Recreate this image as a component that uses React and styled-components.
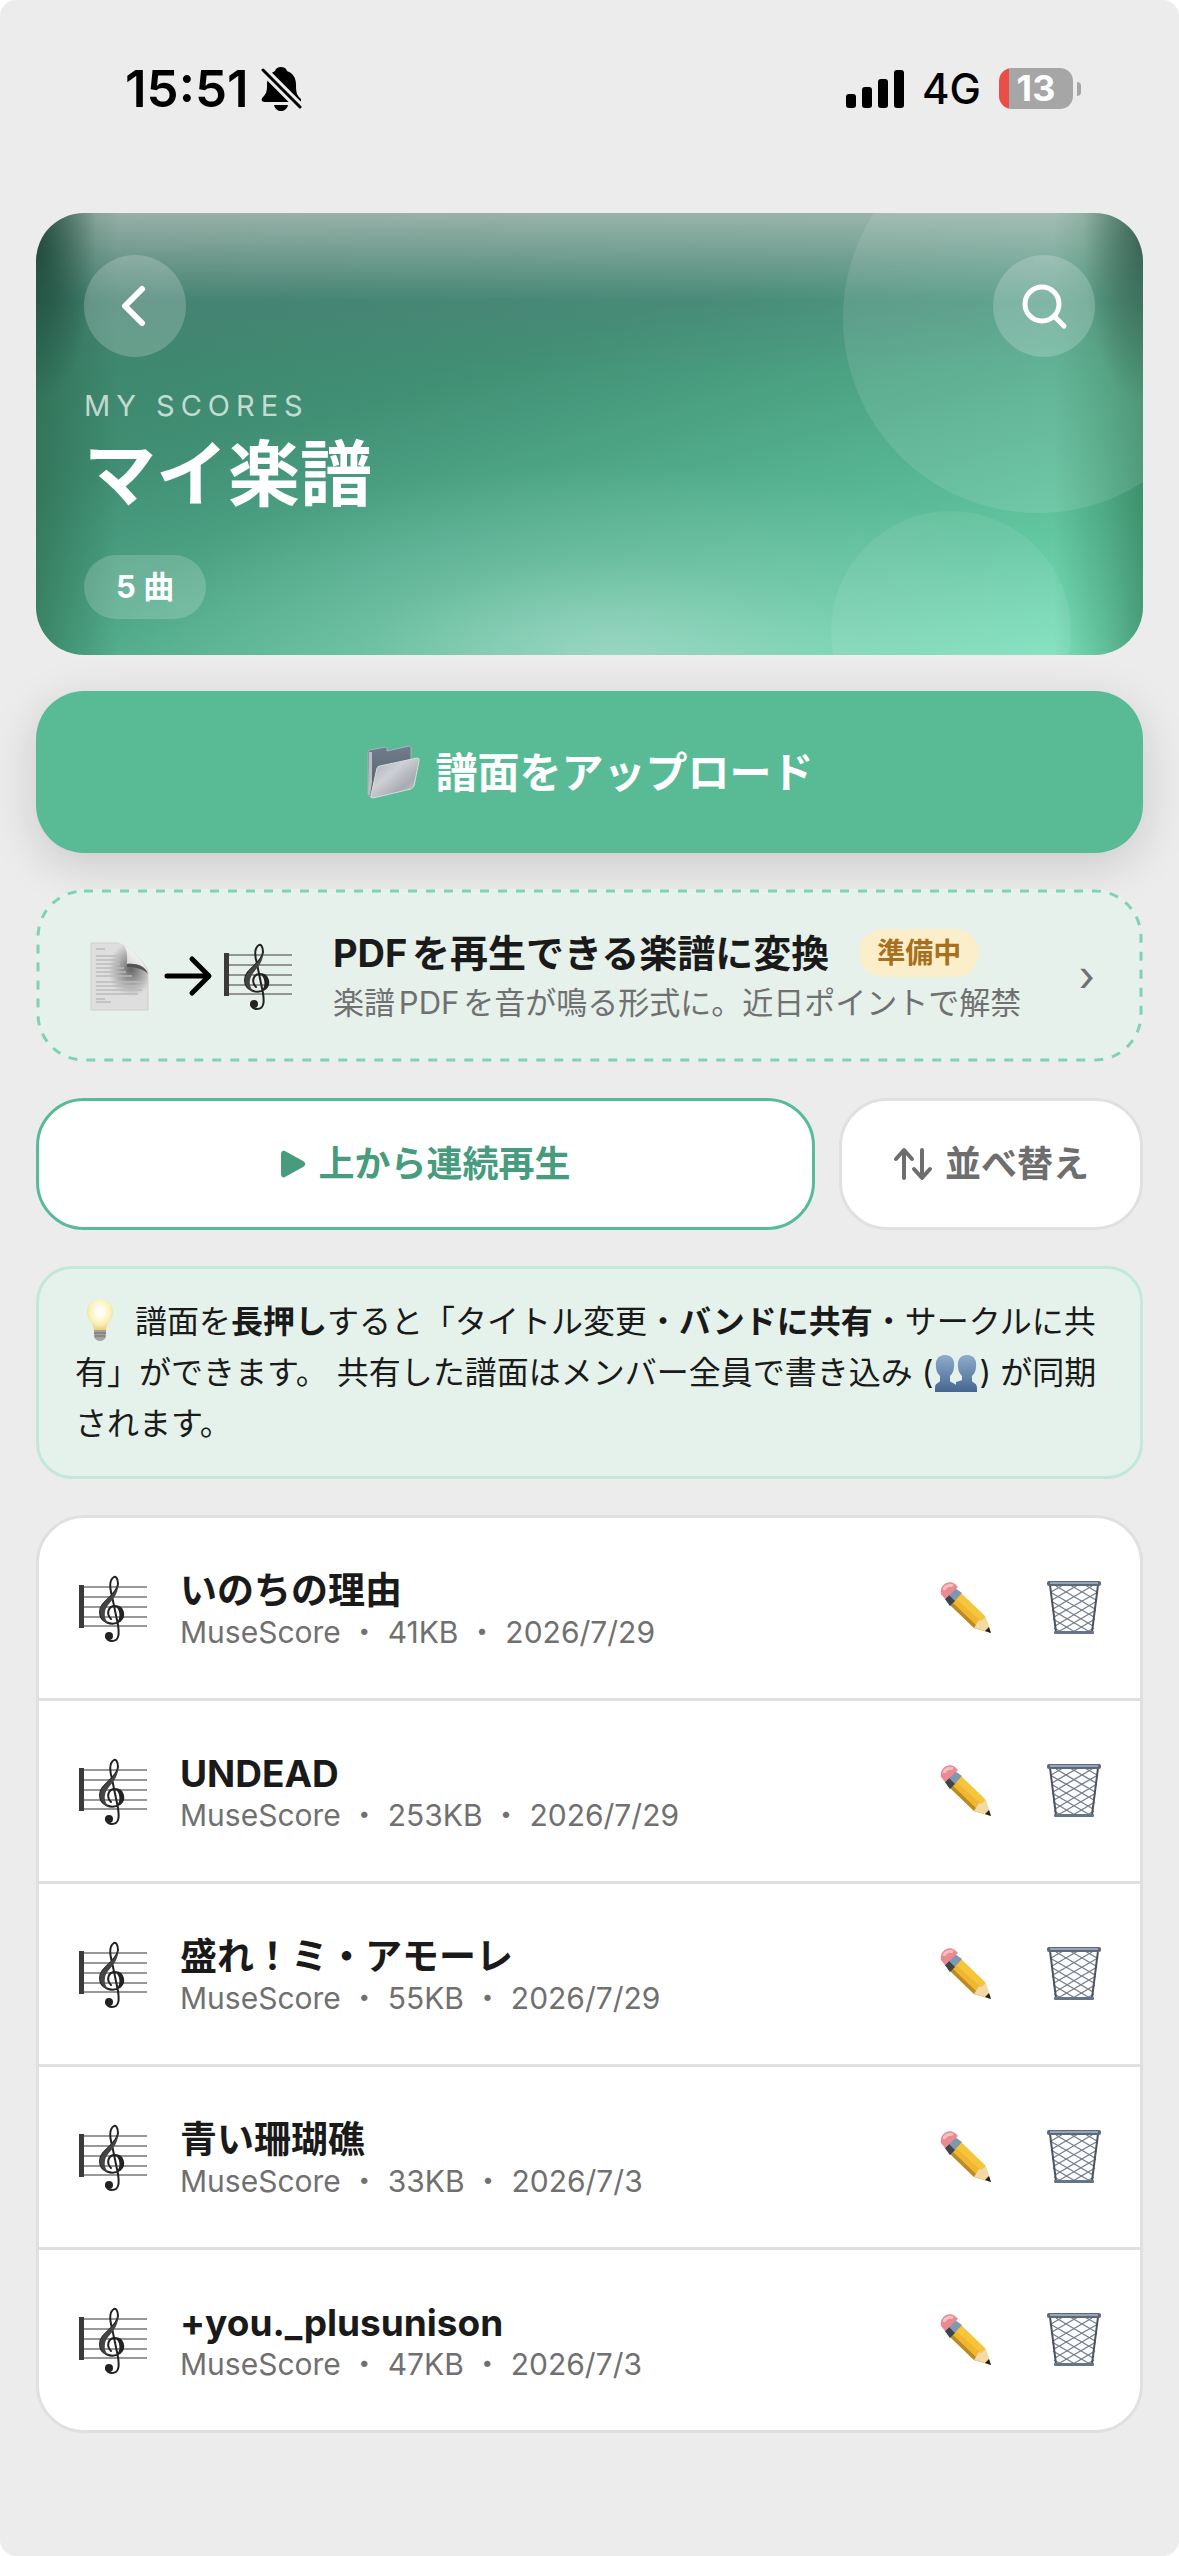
import React from 'react';
import styled, { createGlobalStyle } from 'styled-components';

const GlobalStyle = createGlobalStyle`
  html {
    background: #fff;
  }

  body {
    margin: 0;
    font-family: Inter, 'Noto Sans CJK JP', sans-serif;
    color: #1a1a1a;
    text-autospace: normal;
  }

  *, *::before, *::after {
    box-sizing: border-box;
  }

  button {
    font: inherit;
    color: inherit;
    border: none;
    padding: 0;
    cursor: pointer;
  }
`;

const Screen = styled.div`
  min-height: 100vh;
  padding-bottom: 123px;
  background: #ececec;
  border-radius: 16px;
`;

const StatusBar = styled.header`
  display: flex;
  align-items: center;
  justify-content: space-between;
  height: 177px;
  padding: 0 98px 0 125px;
  color: #000;
`;

const StatusGroup = styled.div`
  display: flex;
  align-items: center;
  gap: ${(props) => props.$gap}px;
`;

const Clock = styled.time`
  font-size: 51px;
  font-weight: 600;
  line-height: 60px;
`;

const Network = styled.span`
  font-size: 42px;
  font-weight: 500;
  line-height: 60px;
`;

const Battery = styled.div`
  display: flex;
  align-items: center;
  gap: 4px;
`;

const BatteryBody = styled.div`
  width: 74px;
  height: 41px;
  border-radius: 13px;
  background: linear-gradient(90deg, #eb4e46 10px, #a6a6a6 10px);
  color: #fff;
  font-size: 36px;
  font-weight: 700;
  line-height: 41px;
  text-align: center;
`;

const BatteryCap = styled.div`
  width: 4px;
  height: 14px;
  border-radius: 0 4px 4px 0;
  background: #a6a6a6;
`;

const Main = styled.main`
  display: flex;
  flex-direction: column;
  gap: 36px;
  padding: 36px 36px 0;
`;

const Hero = styled.section`
  position: relative;
  overflow: hidden;
  padding: 42px 48px 36px;
  border-radius: 48px;
  color: #fff;
  background:
    radial-gradient(60px 160px at 0 30px, rgba(24, 66, 54, 0.85), rgba(24, 66, 54, 0)),
    radial-gradient(60px 160px at 100% 30px, rgba(24, 66, 54, 0.75), rgba(24, 66, 54, 0)),
    linear-gradient(90deg, rgba(38, 96, 70, 0.5), rgba(38, 96, 70, 0) 82px),
    linear-gradient(270deg, rgba(38, 112, 74, 0.6), rgba(38, 112, 74, 0.3) 40px, rgba(38, 112, 74, 0) 90px),
    linear-gradient(180deg, rgba(214, 208, 210, 0.6), rgba(110, 120, 140, 0.16) 88px, rgba(90, 110, 130, 0) 160px),
    radial-gradient(500px 190px at 52% 100%, rgba(190, 226, 216, 0.6), rgba(190, 226, 216, 0.2) 50%, rgba(190, 226, 216, 0)),
    linear-gradient(164deg, #3a7d67 0%, #408e73 36%, #50aa8a 58%, #61c5a0 80%, #7fe6c2 100%);
`;

const Bubble = styled.span`
  position: absolute;
  width: ${(props) => props.$size}px;
  height: ${(props) => props.$size}px;
  border-radius: 50%;
  background: rgba(255, 255, 255, ${(props) => props.$alpha});
`;

const TopBubble = styled(Bubble)`
  top: -90px;
  right: -90px;
`;

const BottomBubble = styled(Bubble)`
  bottom: -96px;
  right: 72px;
`;

const HeroBar = styled.div`
  position: relative;
  display: flex;
  justify-content: space-between;
`;

const RoundButton = styled.button`
  display: flex;
  align-items: center;
  justify-content: center;
  width: 102px;
  height: 102px;
  border-radius: 50%;
  background: rgba(255, 255, 255, 0.2);
`;

const Eyebrow = styled.p`
  margin: 32px 0 0;
  font-size: 29px;
  line-height: 34px;
  letter-spacing: 6px;
  color: rgba(255, 255, 255, 0.7);
`;

const Title = styled.h1`
  margin: 0;
  font-size: 72px;
  font-weight: 700;
  line-height: 102px;
`;

const Count = styled.span`
  display: inline-block;
  margin-top: 30px;
  padding: 0 32px;
  border-radius: 32px;
  background: rgba(255, 255, 255, 0.18);
  font-size: 31px;
  font-weight: 700;
  line-height: 64px;
  vertical-align: top;
`;

const UploadButton = styled.button`
  display: flex;
  align-items: center;
  justify-content: center;
  gap: 14px;
  height: 162px;
  border-radius: 48px;
  background: #58bb96;
  box-shadow: 0 12px 48px rgba(0, 0, 0, 0.15);
  color: #fff;
  font-size: 42px;
  font-weight: 700;
`;

const ButtonLabel = styled.span`
  padding-bottom: 6px;
`;

const ConvertCard = styled.button`
  position: relative;
  display: flex;
  align-items: center;
  min-height: 173px;
  padding: 0 48px 0 51px;
  border-radius: 48px;
  background: #e6f1eb;
  text-align: left;
`;

const DashedOutline = styled.svg`
  position: absolute;
  inset: 0;
  width: 100%;
  height: 100%;
  overflow: visible;

  rect {
    x: 2px;
    y: 2px;
    width: calc(100% - 4px);
    height: calc(100% - 4px);
    rx: 46px;
    fill: none;
    stroke: #7fd3b4;
    stroke-width: 3px;
    stroke-dasharray: 9 9;
  }
`;

const ConvertIcons = styled.span`
  display: flex;
  align-items: center;
  gap: 8px;
  margin-right: 40px;
`;

const ConvertText = styled.span`
  flex: 1;
`;

const ConvertTitle = styled.span`
  display: flex;
  align-items: center;
  gap: 30px;
  font-size: 38px;
  font-weight: 700;
  line-height: 54px;
`;

const SoonBadge = styled.span`
  padding: 0 18px;
  border-radius: 24px;
  background: #fbeecb;
  color: #a8701d;
  font-size: 28px;
  font-weight: 700;
  line-height: 48px;
`;

const ConvertNote = styled.span`
  display: block;
  color: #707070;
  font-size: 31px;
  line-height: 46px;
`;

const Chevron = styled.span`
  color: #707070;
  font-size: 42px;
  line-height: 46px;
`;

const Actions = styled.div`
  display: flex;
  gap: 24px;
`;

const ActionButton = styled.button`
  display: flex;
  flex: ${(props) => (props.$primary ? '1' : 'none')};
  align-items: center;
  justify-content: center;
  gap: 12px;
  height: 132px;
  padding: 0 51px;
  border: 3px solid ${(props) => (props.$primary ? '#58bb96' : '#e0e0e0')};
  border-radius: 48px;
  background: #fff;
  color: ${(props) => (props.$primary ? '#479c7e' : '#6e6e6e')};
  font-size: 36px;
  font-weight: 700;
`;

const Tip = styled.p`
  margin: 0;
  padding: 27px 36px;
  border: 3px solid #c2e8da;
  border-radius: 36px;
  background: #e5f2eb;
  font-size: 32px;
  line-height: 51px;

  svg {
    vertical-align: -9px;
  }
`;

const ScoreList = styled.ul`
  margin: 0;
  padding: 0;
  overflow: hidden;
  border: 3px solid #e0e0e0;
  border-radius: 48px;
  background: #fff;
  list-style: none;
`;

const ScoreRow = styled.li`
  display: flex;
  align-items: center;
  height: 183px;
  padding: 0 33px 0 39px;
  border-bottom: 3px solid #e0e0e0;

  &:last-child {
    height: 180px;
    border-bottom: none;
  }
`;

const ScoreInfo = styled.div`
  flex: 1;
  min-width: 0;
  margin-left: 32px;
  padding-top: 6px;
`;

const ScoreTitle = styled.h2`
  margin: 0;
  font-size: 37px;
  font-weight: 700;
  line-height: 42px;
`;

const ScoreMeta = styled.p`
  margin: 0;
  color: #707070;
  font-size: 30px;
  line-height: 40px;
`;

const RowButton = styled.button`
  display: flex;
  align-items: center;
  justify-content: center;
  width: 66px;
  height: 66px;
  margin-left: 42px;
  background: none;
`;

const BellOffIcon = () => (
  <svg width="42" height="44" viewBox="0 0 42 44">
    <path d="M20 0c3 0 5 1 6 4 6 2 9 7 9 14 0 8 1 10 4 13 2 2 1 4-1 4H4c-4 0-4-3-2-5 3-3 4-5 4-12C6 11 9 6 14 4c1-3 3-4 6-4z" />
    <path d="M13 38h14c-1 4-4 6-7 6s-6-2-7-6z" />
    <path d="M2 3l37 37" stroke="#ececec" strokeWidth="9" />
    <path d="M2 3l37 37" stroke="#000" strokeWidth="3" strokeLinecap="round" />
  </svg>
);

const SignalIcon = () => (
  <svg width="58" height="38" viewBox="0 0 58 38">
    <rect x="0" y="24" width="10" height="14" rx="3" />
    <rect x="16" y="17" width="10" height="21" rx="3" />
    <rect x="32" y="9" width="10" height="29" rx="3" />
    <rect x="48" y="0" width="10" height="38" rx="3" />
  </svg>
);

const BackIcon = () => (
  <svg width="48" height="48" viewBox="0 0 48 48" fill="none" stroke="#fff" strokeWidth="6" strokeLinecap="round" strokeLinejoin="round">
    <path d="M31 7L14 24l17 17" />
  </svg>
);

const SearchIcon = () => (
  <svg width="48" height="48" viewBox="0 0 48 48" fill="none" stroke="#fff" strokeWidth="5" strokeLinecap="round">
    <circle cx="22" cy="22" r="17" />
    <path d="M35 35l9 9" />
  </svg>
);

const FolderIcon = () => (
  <svg width="56" height="54" viewBox="0 0 56 54">
    <defs>
      <linearGradient id="folderBack" x1="0" y1="0" x2="0" y2="1">
        <stop offset="0" stopColor="#717d8a" />
        <stop offset="1" stopColor="#4f5d6c" />
      </linearGradient>
      <linearGradient id="folderFront" x1="0" y1="0" x2="1" y2="1">
        <stop offset="0" stopColor="#a9adb4" />
        <stop offset="0.4" stopColor="#cdd0d5" />
        <stop offset="0.7" stopColor="#a7abb2" />
        <stop offset="1" stopColor="#d3d5d9" />
      </linearGradient>
    </defs>
    <path d="M3 7q0-2 2-2l16-3q1 0 1 1v3l22-5q2 0 2 2v30L6 52q-3 0-3-3z" fill="url(#folderBack)" stroke="#a9b2ba" strokeWidth="1" />
    <path d="M4 7l3 0v30L5 51l-2-2z" fill="#b8bfc4" />
    <path d="M12 23q1-2 3-2l37-8q3 0 2 3l-5 25q-1 2-3 3L8 53q-3 0-2-3z" fill="url(#folderFront)" stroke="#d9dbde" strokeWidth="1" />
  </svg>
);

const DocumentIcon = () => (
  <svg width="66" height="72" viewBox="0 0 66 72">
    <defs>
      <linearGradient id="pageCurl" x1="0" y1="1" x2="0.6" y2="0.3">
        <stop offset="0" stopColor="#777" />
        <stop offset="0.4" stopColor="#d4d4d4" />
        <stop offset="1" stopColor="#f6f6f6" />
      </linearGradient>
      <radialGradient id="pageShade" cx="0.7" cy="0.4" r="0.4">
        <stop offset="0" stopColor="#666" />
        <stop offset="1" stopColor="#dedede" />
      </radialGradient>
    </defs>
    <path d="M4 3h26c7 0 31 20 31 31v36H4z" fill="url(#pageShade)" stroke="#cfcfcf" strokeWidth="1" />
    <g stroke="#bbb" strokeWidth="1.6">
      <path d="M9 9h9M9 16h21M9 20h25M9 24h24M9 28h28M9 32h30M9 36h36M9 42h46M9 46h44M9 50h46M9 54h42M9 59h9M9 62h15" />
    </g>
    <path d="M31 3c7 1 10 6 9 21 11-1 19 3 21 10C59 22 42 6 31 3z" fill="url(#pageCurl)" />
    <path d="M40 24c11-1 19 3 21 10-3-4-11-7-21-7z" fill="#555" />
  </svg>
);

const ArrowIcon = () => (
  <svg width="54" height="46" viewBox="0 0 54 46" fill="none" stroke="#000" strokeWidth="5" strokeLinecap="round" strokeLinejoin="round">
    <path d="M6 23h41M31 6l17 17-17 17" />
  </svg>
);

const ClefIcon = () => (
  <svg width="70" height="70" viewBox="0 0 70 70" fill="none">
    <path d="M3 14h66M3 24h66M3 34h66M3 44h66M3 53h66" stroke="#777" strokeWidth="1.6" />
    <rect x="1" y="12" width="5" height="43" fill="#3a3a3a" />
    <path
      d="M33 46c-5-5-3-13 4-13 8 0 11 10 5 15-8 6-20 1-20-9 0-11 17-16 18-28 0-5-2-8-4-7-5 3-4 12-2 19l6 29c1 7 2 16-6 16-3 0-6-2-6-5"
      stroke="#222"
      strokeWidth="2"
      strokeLinecap="round"
    />
    <path d="M40 11c-1 11-18 17-18 28 0 6 4 10 9 12-3-3-5-7-4-12 1-9 14-14 13-28z" fill="#444" />
    <path d="M37 33c8 0 11 10 5 15l-3 1c4-4 3-13-2-16z" fill="#222" />
    <circle cx="31" cy="63" r="4" fill="#222" />
  </svg>
);

const PlayIcon = () => (
  <svg width="26" height="28" viewBox="0 0 26 28">
    <path d="M1 4c0-3 2-4 4-3l18 10c3 2 3 4 0 6L5 27c-2 1-4 0-4-3z" fill="currentColor" />
  </svg>
);

const SortIcon = () => (
  <svg width="40" height="34" viewBox="0 0 40 34" fill="none" stroke="currentColor" strokeWidth="4" strokeLinecap="round" strokeLinejoin="round">
    <path d="M11 31V4M3 12l8-9 8 9M29 3v27M21 22l8 9 8-9" />
  </svg>
);

const BulbIcon = () => (
  <svg width="51" height="44" viewBox="0 0 51 44">
    <defs>
      <radialGradient id="bulbGlow" cx="0.5" cy="0.4" r="0.6">
        <stop offset="0.2" stopColor="#fffef4" />
        <stop offset="0.7" stopColor="#fbf0b8" />
        <stop offset="1" stopColor="#e6cf7c" />
      </radialGradient>
    </defs>
    <path d="M25 1c8 0 13 6 13 13 0 8-7 11-7 18H19c0-7-7-10-7-18C12 7 17 1 25 1z" fill="url(#bulbGlow)" />
    <path d="M19 32h12v7q-2 4-6 4t-6-4z" fill="#a3a3a3" />
    <path d="M19 35h12M20 38h10" stroke="#6c6c6c" strokeWidth="1" />
  </svg>
);

const PeopleIcon = () => (
  <svg width="46" height="38" viewBox="0 0 46 38">
    <defs>
      <linearGradient id="peopleBlue" x1="0" y1="0" x2="0" y2="1">
        <stop offset="0" stopColor="#8facce" />
        <stop offset="1" stopColor="#456690" />
      </linearGradient>
    </defs>
    <g fill="url(#peopleBlue)">
      <path d="M34 0c7 0 10 5 9 12 0 4-2 7-4 9v5c1 2 5 2 5 7v4H23V27c2-1 5-1 6-2v-4c-2-2-4-5-4-9-1-7 2-12 9-12z" />
      <path d="M12 0c7 0 10 5 9 12 0 4-2 7-4 9v5c1 2 7 2 7 7v4H2v-4c0-5 4-5 5-7v-5c-2-2-4-5-4-9-1-7 2-12 9-12z" />
    </g>
  </svg>
);

const PencilIcon = () => (
  <svg width="56" height="56" viewBox="0 0 56 56">
    <path d="M11 24L21 11l26 25 6 17-17-5z" fill="#f5c63c" />
    <path d="M11 24l4-5 27 27 11 7-17-5z" fill="#b98a25" />
    <path d="M13 21l3-4 28 25-4 5z" fill="#f0b62f" />
    <path d="M36 48l5-8 2 1 5-4 5 16z" fill="#f3d9a4" />
    <path d="M47 51l4-4 2 6z" fill="#222" />
    <path d="M7 19l10-11 7 5-12 13z" fill="#8097b3" />
    <path d="M7 19l4-4 6 6-5 5z" fill="#3f444b" />
    <path d="M3 14C1 6 10-1 17 4l3 3L7 19z" fill="#e88a90" />
    <path d="M6 10c1-4 6-6 9-4" stroke="#f8bfc1" strokeWidth="3" fill="none" />
  </svg>
);

const TrashIcon = () => (
  <svg width="56" height="56" viewBox="0 0 56 56" fill="none">
    <g stroke="#76808f" strokeWidth="1.4">
      <path d="M5 12l12-7M6 20L32 5M7 29L46 6M8 37l44-25M9 46l42-25M12 52l38-22M27 52l22-13M41 52l7-4" />
      <path d="M51 12L39 5M50 20L24 5M49 29L10 6M48 37L4 12M47 46L5 21M44 52L6 30M29 52L7 39M15 52l-7-4" />
    </g>
    <path d="M4 5l6 47M52 5l-6 47" stroke="#4d545f" strokeWidth="2" />
    <rect x="1" y="1" width="54" height="5" rx="2" fill="#5d6878" />
    <path d="M4 3h48" stroke="#a8bad3" strokeWidth="1.6" />
    <rect x="8" y="51" width="40" height="3" rx="1" fill="#66748a" />
  </svg>
);

const scores = [
  { id: 1, title: 'いのちの理由', size: '41KB', date: '2026/7/29' },
  { id: 2, title: 'UNDEAD', size: '253KB', date: '2026/7/29' },
  { id: 3, title: '盛れ！ミ・アモーレ', size: '55KB', date: '2026/7/29' },
  { id: 4, title: '青い珊瑚礁', size: '33KB', date: '2026/7/3' },
  { id: 5, title: '+you._plusunison', size: '47KB', date: '2026/7/3' },
];

function App() {
  return (
    <Screen lang="ja">
      <GlobalStyle />
      <StatusBar>
        <StatusGroup $gap={12}>
          <Clock>15:51</Clock>
          <BellOffIcon />
        </StatusGroup>
        <StatusGroup $gap={18}>
          <SignalIcon />
          <Network>4G</Network>
          <Battery>
            <BatteryBody>13</BatteryBody>
            <BatteryCap />
          </Battery>
        </StatusGroup>
      </StatusBar>

      <Main>
        <Hero>
          <TopBubble $size={390} $alpha={0.1} />
          <BottomBubble $size={240} $alpha={0.08} />
          <HeroBar>
            <RoundButton aria-label="戻る">
              <BackIcon />
            </RoundButton>
            <RoundButton aria-label="検索">
              <SearchIcon />
            </RoundButton>
          </HeroBar>
          <Eyebrow>MY SCORES</Eyebrow>
          <Title>マイ楽譜</Title>
          <Count>{scores.length} 曲</Count>
        </Hero>

        <UploadButton>
          <FolderIcon />
          <ButtonLabel>譜面をアップロード</ButtonLabel>
        </UploadButton>

        <ConvertCard>
          <DashedOutline aria-hidden="true">
            <rect />
          </DashedOutline>
          <ConvertIcons>
            <DocumentIcon />
            <ArrowIcon />
            <ClefIcon />
          </ConvertIcons>
          <ConvertText>
            <ConvertTitle>
              PDFを再生できる楽譜に変換
              <SoonBadge>準備中</SoonBadge>
            </ConvertTitle>
            <ConvertNote>楽譜PDFを音が鳴る形式に。近日ポイントで解禁</ConvertNote>
          </ConvertText>
          <Chevron>›</Chevron>
        </ConvertCard>

        <Actions>
          <ActionButton $primary>
            <PlayIcon />
            <ButtonLabel>上から連続再生</ButtonLabel>
          </ActionButton>
          <ActionButton>
            <SortIcon />
            <ButtonLabel>並べ替え</ButtonLabel>
          </ActionButton>
        </Actions>

        <Tip>
          <BulbIcon /> 譜面を<b>長押し</b>すると「タイトル変更・<b>バンドに共有</b>・サークルに共有」ができます。
          共有した譜面はメンバー全員で書き込み (<PeopleIcon />) が同期されます。
        </Tip>

        <ScoreList>
          {scores.map((score) => (
            <ScoreRow key={score.id}>
              <ClefIcon />
              <ScoreInfo>
                <ScoreTitle>{score.title}</ScoreTitle>
                <ScoreMeta>MuseScore ・ {score.size} ・ {score.date}</ScoreMeta>
              </ScoreInfo>
              <RowButton aria-label={`${score.title}を編集`}>
                <PencilIcon />
              </RowButton>
              <RowButton aria-label={`${score.title}を削除`}>
                <TrashIcon />
              </RowButton>
            </ScoreRow>
          ))}
        </ScoreList>
      </Main>
    </Screen>
  );
}

export default App;
